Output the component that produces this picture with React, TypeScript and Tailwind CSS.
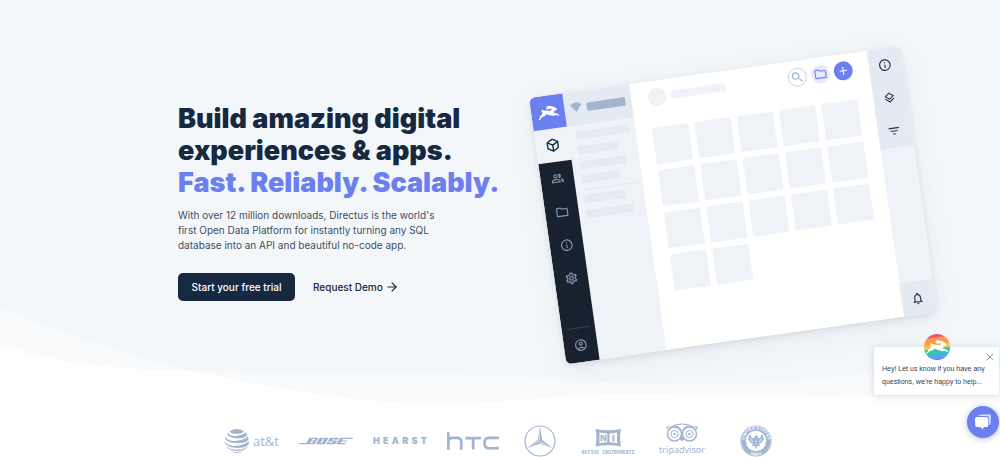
import React from "react";
import {
  MdAdd,
  MdFilterList,
  MdOutlineAccountCircle,
  MdOutlineFolder,
  MdOutlineInfo,
  MdOutlineLayers,
  MdOutlineNotifications,
  MdOutlinePeopleAlt,
  MdOutlineSettings,
  MdSearch,
} from "react-icons/md";
import { SiAtandt, SiBose, SiDirectus, SiHtc } from "react-icons/si";
import { ArrowRight, Box, X } from "lucide-react";

function Waves() {
  return (
    <svg
      className="absolute inset-x-0 top-0 h-[410px] w-full"
      viewBox="0 0 1000 410"
      preserveAspectRatio="none"
      aria-hidden="true"
    >
      <g fill="#e8eef4" fillOpacity="0.3">
        <path d="M0 0H1000V396C960 396 920 396 870 396C760 398 670 393 605 394.500C550 396 500 404 430 404C320 402 130 368 0 306Z" />
        <path d="M0 0H1000V345C930 362 850 384 690 384C560 384 560 374 370 372.500C200 370 90 378 0 344Z" />
      </g>
      <path
        d="M0 0H1000V345C930 362 850 384 690 384C560 384 560 374 370 372.500L200 371.500C120 351 50 330 0 306Z"
        fill="#f3f7fa"
      />
    </svg>
  );
}

const sidebarLines = [
  { y: 40, width: 54 },
  { y: 55, width: 41 },
  { y: 70, width: 47 },
  { y: 84, width: 38 },
  { y: 104, width: 41 },
  { y: 119, width: 47 },
];

const tiles = Array.from({ length: 17 }, (_, i) => ({
  x: 117.6 + (i % 5) * 42.7,
  y: 47 + Math.floor(i / 5) * 42.6,
}));

function AppIllustration() {
  return (
    <svg className="h-[370px] w-[450px] shrink-0" viewBox="510 20 450 370" aria-hidden="true">
      <defs>
        <clipPath id="window">
          <rect width="374.500" height="269" rx="6" />
        </clipPath>
        <filter id="wide" x="-20%" y="-20%" width="140%" height="150%">
          <feGaussianBlur stdDeviation="14" />
        </filter>
        <filter id="tight" x="-10%" y="-10%" width="120%" height="120%">
          <feGaussianBlur stdDeviation="3" />
        </filter>
      </defs>
      <g transform="translate(529 98) rotate(-8)">
        <rect y="7" width="374.500" height="269" rx="6" fill="#172940" opacity="0.06" filter="url(#wide)" />
        <rect x="1" y="3" width="372.500" height="267" rx="6" fill="#172940" opacity="0.13" filter="url(#tight)" />
        <g clipPath="url(#window)">
          <rect width="375" height="269" fill="#fff" />
          <rect width="101" height="269" fill="#eff3f8" />
          <rect x="33" width="68" height="34" fill="#e3eaf2" />
          <rect y="67" width="33.500" height="202" fill="#18222f" />
          <rect width="33.500" height="33.500" fill="#6c7ff0" />
          <rect x="341" width="34" height="269" fill="#eff3f8" />
          <rect x="341" width="34" height="100.500" fill="#e3eaf2" />
          <rect x="341" y="235" width="34" height="34" fill="#e3eaf2" />
        </g>

        <SiDirectus x="6.500" y="6.500" size={21} color="#fff" />
        <Box x="10" y="43" size={14} color="#172940" strokeWidth={2.4} />
        <g color="#8196b1">
          <MdOutlinePeopleAlt x="10.500" y="77" size={13} />
          <MdOutlineFolder x="10" y="110.500" size={14} />
          <MdOutlineInfo x="10" y="144" size={14} />
          <MdOutlineSettings x="10" y="177.500" size={14} />
          <MdOutlineAccountCircle x="10" y="245" size={14} />
        </g>
        <path d="M5 234.500H29.500" stroke="#3d4d60" strokeWidth="0.7" />

        <path d="M39.500 13Q45.300 8.500 51 13L45.300 20.500Z" fill="#a2b5cd" />
        <rect x="56" y="12.500" width="39" height="8.500" rx="1.500" fill="#a2b5cd" />
        {sidebarLines.map((line) => (
          <rect key={line.y} x="41" y={line.y} width={line.width} height="8" rx="1.500" fill="#e3eaf2" />
        ))}
        <path d="M41 98.500H95" stroke="#dfe6ee" strokeWidth="0.8" />

        <circle cx="127" cy="16.800" r="9.300" fill="#eff3f8" />
        <rect x="141" y="12.500" width="55" height="8" rx="1.500" fill="#eff3f8" />
        {tiles.map((tile) => (
          <rect key={`${tile.x}-${tile.y}`} x={tile.x} y={tile.y} width="36.500" height="36.300" rx="1.500" fill="#eff3f8" />
        ))}

        <circle cx="268.600" cy="16.800" r="9" fill="#fff" stroke="#c5d2e1" strokeWidth="0.9" />
        <MdSearch x="261.600" y="9.800" size={14} color="#a2b5cd" />
        <circle cx="292" cy="16.800" r="9.400" fill="#e9e9fd" />
        <MdOutlineFolder x="285" y="9.800" size={14} color="#7284f2" />
        <circle cx="315" cy="16.800" r="9.500" fill="#6c7ff0" />
        <MdAdd x="308.500" y="10.300" size={13} color="#fff" />

        <g color="#263a51">
          <MdOutlineInfo x="350" y="10" size={14} />
          <MdOutlineLayers x="350.500" y="43.500" size={13} />
          <MdFilterList x="350" y="76.500" size={14} />
          <MdOutlineNotifications x="350" y="245.500" size={14} />
        </g>
      </g>
    </svg>
  );
}

function Logos() {
  return (
    <section
      aria-label="Customers"
      className="flex h-[67px] items-center justify-center gap-5 pt-[34px] pl-2 text-[#a2b5d0]"
    >
      <div className="flex w-[54px] shrink-0 items-center gap-1">
        <SiAtandt className="size-6 shrink-0" aria-hidden="true" />
        <span className="font-['Open_Sans',sans-serif] text-[13px] leading-4">at&amp;t</span>
      </div>

      <SiBose className="size-[54px] shrink-0" role="img" aria-label="Bose" />

      <div className="flex w-[54px] shrink-0 justify-between font-[Inter,sans-serif] text-[9px] leading-4 font-black">
        {["H", "E", "A", "R", "S", "T"].map((letter) => (
          <span key={letter}>{letter}</span>
        ))}
      </div>

      <SiHtc className="size-[52px] shrink-0" role="img" aria-label="htc" />

      <svg className="h-9 w-[42px] shrink-0" viewBox="-21 -18 42 36" fill="currentColor" role="img" aria-label="Mercedes-Benz">
        <circle r="15" fill="none" stroke="currentColor" strokeWidth="1.200" />
        <path d="M0-14.200L2.200-1.200L12.300 7.100L0 2.500L-12.300 7.100L-2.200-1.200Z" />
        <path d="M0-12L-0.300 0L-10.500 6L-1.500-0.800ZM0.400 0.500L10.500 6L0.200 1.800Z" fill="#dde5ef" />
      </svg>

      <svg className="h-9 w-[54px] shrink-0" viewBox="0 0 54 36" fill="currentColor" role="img" aria-label="Native Instruments">
        <path d="M14.500 6Q27 8.500 40 6Q38.200 14.500 40 23.500Q27 21 14.500 23.500Q16.300 14.500 14.500 6Z" />
        <path d="M18.500 9.500Q23 10.500 26.300 10.500V19.300Q23 19.300 18.500 20.200ZM28.500 10.500Q31 10.500 36 9.500V20.200Q31 19.300 28.500 19.300Z" fill="#fff" />
        <g textAnchor="middle" fontFamily="Liberation Sans Narrow, Liberation Sans, sans-serif" fontSize="9" fontWeight="700" stroke="currentColor" strokeWidth="0.400">
          <text x="22.500" y="18.200">N</text>
          <text x="32.300" y="18.200">I</text>
        </g>
        <text x="27" y="31" textAnchor="middle" fontFamily="Liberation Mono, monospace" fontSize="4.900" fontWeight="700">
          NATIVE INSTRUMENTS
        </text>
      </svg>

      <div className="flex w-[54px] shrink-0 flex-col items-center">
        <svg className="h-[19px] w-8" viewBox="0 0 32 19" fill="none" stroke="currentColor" aria-hidden="true">
          <circle cx="8.500" cy="11" r="7" strokeWidth="1.500" />
          <circle cx="23.500" cy="11" r="7" strokeWidth="1.500" />
          <circle cx="8.500" cy="11" r="3.600" strokeWidth="1" />
          <circle cx="23.500" cy="11" r="3.600" strokeWidth="1" />
          <path d="M0.500 4H5.500Q10 1 16 1T26.500 4H31.500L29.500 7M2.500 7L0.500 4M15.300 8Q14.500 4 9.500 3.300M16.700 8Q17.500 4 22.500 3.300" strokeWidth="1.100" />
          <circle cx="8.500" cy="11" r="1.300" fill="currentColor" stroke="none" />
          <circle cx="23.500" cy="11" r="1.300" fill="currentColor" stroke="none" />
          <path d="M13.500 15.500L16 18.800L18.500 15.500L16 13.500Z" fill="currentColor" stroke="none" />
        </svg>
        <span className="font-['Noto_Sans',sans-serif] text-[9px] leading-4">tripadvisor</span>
      </div>

      <svg className="h-9 w-[54px] shrink-0" viewBox="-27 -18 54 36" fill="currentColor" role="img" aria-label="United States Navy">
        <defs>
          <path id="seal-top" d="M-11.300 3.500A11.800 11.800 0 1 1 11.300 3.500" />
          <path id="seal-bottom" d="M-14 4A14.500 14.500 0 0 0 14 4" />
        </defs>
        <circle r="15.600" />
        <circle r="14.800" fill="none" stroke="#fff" strokeWidth="0.300" />
        <circle r="10.200" fill="#fff" />
        <g fill="#fff" fontFamily="Liberation Sans, sans-serif" fontSize="4.400" fontWeight="700" textAnchor="middle">
          <text>
            <textPath href="#seal-top" startOffset="50%">UNITED STATES</textPath>
          </text>
          <text>
            <textPath href="#seal-bottom" startOffset="50%">NAVY</textPath>
          </text>
        </g>
        <path d="M0-5.500Q2-6 2-4.200L1.800-2.500Q5-3 5.800-7Q8.500-4 7.400-0.500Q6 2.500 3 2.800L4.500 5.500L1.800 4.500L0 7.500L-1.800 4.500L-4.500 5.500L-3 2.800Q-6 2.500-7.400-0.500Q-8.500-4-5.800-7Q-5-3-1.800-2.500L-1.200-4Q-1.500-5.500 0-5.500Z" />
        <path d="M-6.500-3L-3-0.500M6.500-3L3-0.500M-6.500-0.500L-3 1M6.500-0.500L3 1M0-1V4" stroke="#fff" strokeWidth="0.600" />
      </svg>
    </section>
  );
}

function ChatWidget() {
  return (
    <aside
      aria-label="Chat"
      className="absolute right-px bottom-[19px] flex flex-col items-end gap-[11px]"
    >
      <div className="relative h-12 w-[125px] rounded-xs bg-white px-2 pt-[15px] shadow-[0_1px_8px_rgba(23,41,64,0.16)]">
        <span className="absolute -top-[13px] left-1/2 flex size-[26px] -translate-x-1/2 items-center justify-center overflow-hidden rounded-full bg-[linear-gradient(172deg,#e85570_0_14%,#f99a48_20%_36%,#fcc04f_44%_54%,#2bc9a4_57%_72%,#5a9ff0_76%_88%,#6c6ff0_92%)] text-white">
          <SiDirectus className="size-[22px]" aria-hidden="true" />
        </span>
        <button type="button" aria-label="Close" className="absolute top-1 right-[3px] text-[#7f98b8]">
          <X className="size-3" strokeWidth={2} />
        </button>
        <p className="font-['Liberation_Sans',sans-serif] text-[7px] leading-[13px] whitespace-nowrap text-[#2f4157]">
          Hey! Let us know if you have any
          <br />
          questions, we're happy to help...
        </p>
      </div>
      <button
        type="button"
        aria-label="Open chat"
        className="flex size-8 items-center justify-center rounded-full bg-[#6c7ff0] shadow-[0_1px_6px_rgba(23,41,64,0.3)]"
      >
        <svg className="size-[18px]" viewBox="0 0 18 18" aria-hidden="true">
          <path d="M4 3Q5 1.600 7 1.500L15 1.200Q17 1.200 17 3L16.500 10.500Q16.300 12 15 12.300V5Q15 3 13 3Z" fill="#d5daff" />
          <path d="M3 4H12.500Q14.300 4 14.300 5.800V12Q14.300 14 12.500 14H10L8.500 16.500L7 14.300L3 14Q1.300 13.800 1.200 12L1 6Q1 4 3 4Z" fill="#fff" />
        </svg>
      </button>
    </aside>
  );
}

export default function App() {
  return (
    <div className="relative min-h-screen overflow-hidden bg-white font-[Inter,sans-serif] text-[#172940]">
      <Waves />
      <main className="relative">
        <section className="mx-auto flex max-w-[644px] pt-5">
          <div className="w-[332px] shrink-0 pt-[83px]">
            <h1 className="text-[27px] leading-8 font-black whitespace-nowrap">
              Build amazing digital
              <br />
              experiences &amp; apps.
              <br />
              <span className="text-[#6c7ff0]">Fast. Reliably. Scalably.</span>
            </h1>
            <p className="mt-[9px] text-[10px] leading-[15px] whitespace-nowrap text-[#3f4e61]">
              With over 12 million downloads, Directus is the world's
              <br />
              first Open Data Platform for instantly turning any SQL
              <br />
              database into an API and beautiful no-code app.
            </p>
            <div className="mt-5 flex items-center gap-[18px] text-[10px] font-medium">
              <a href="#trial" className="flex h-7 w-[117px] items-center justify-center rounded-[5px] bg-[#172940] text-white">
                Start your free trial
              </a>
              <a href="#demo" className="flex items-center gap-0.5">
                Request Demo
                <ArrowRight className="size-3.5" strokeWidth={2} aria-hidden="true" />
              </a>
            </div>
          </div>
          <AppIllustration />
        </section>
        <Logos />
      </main>
      <ChatWidget />
    </div>
  );
}
